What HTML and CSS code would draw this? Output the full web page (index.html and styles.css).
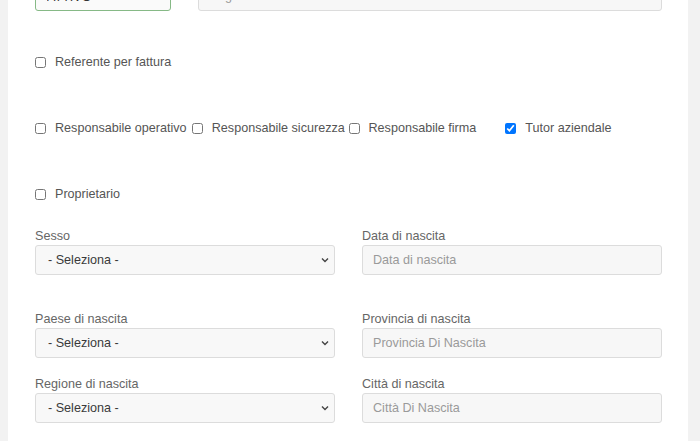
FILE: index.html
```html
<!DOCTYPE html>
<html lang="it">
<head>
    <meta charset="UTF-8">
    <meta name="viewport" content="width=device-width, initial-scale=1.0">
    <title>Anagrafica contatto</title>
    <link rel="stylesheet" href="styles.css">
</head>
<body>
    <div class="card">
        <div class="top-row">
            <input type="text" class="field valid" value="ATTIVO">
            <input type="text" class="field" placeholder="Cognome">
        </div>

        <div class="check-row">
            <label class="check"><input type="checkbox"> Referente per fattura</label>
        </div>

        <div class="check-row four">
            <label class="check"><input type="checkbox"> Responsabile operativo</label>
            <label class="check"><input type="checkbox"> Responsabile sicurezza</label>
            <label class="check"><input type="checkbox"> Responsabile firma</label>
            <label class="check"><input type="checkbox" checked> Tutor aziendale</label>
        </div>

        <div class="check-row">
            <label class="check"><input type="checkbox"> Proprietario</label>
        </div>

        <div class="form-row first">
            <div class="form-fill">
                <label for="sesso">Sesso</label>
                <div class="select-wrap">
                    <select id="sesso" class="field">
                        <option>- Seleziona -</option>
                        <option>M</option>
                        <option>F</option>
                    </select>
                    <svg class="chevron" width="10" height="10" viewBox="0 0 10 10"><path d="M2 3.5 L5 6.5 L8 3.5" fill="none" stroke="#444" stroke-width="1.4"/></svg>
                </div>
            </div>
            <div class="form-fill">
                <label for="nascita">Data di nascita</label>
                <input type="text" id="nascita" class="field" placeholder="Data di nascita">
            </div>
        </div>

        <div class="form-row">
            <div class="form-fill">
                <label for="paese">Paese di nascita</label>
                <div class="select-wrap">
                    <select id="paese" class="field">
                        <option>- Seleziona -</option>
                    </select>
                    <svg class="chevron" width="10" height="10" viewBox="0 0 10 10"><path d="M2 3.5 L5 6.5 L8 3.5" fill="none" stroke="#444" stroke-width="1.4"/></svg>
                </div>
            </div>
            <div class="form-fill">
                <label for="provincia">Provincia di nascita</label>
                <input type="text" id="provincia" class="field" placeholder="Provincia Di Nascita">
            </div>
        </div>

        <div class="form-row">
            <div class="form-fill">
                <label for="regione">Regione di nascita</label>
                <div class="select-wrap">
                    <select id="regione" class="field">
                        <option>- Seleziona -</option>
                    </select>
                    <svg class="chevron" width="10" height="10" viewBox="0 0 10 10"><path d="M2 3.5 L5 6.5 L8 3.5" fill="none" stroke="#444" stroke-width="1.4"/></svg>
                </div>
            </div>
            <div class="form-fill">
                <label for="citta">Città di nascita</label>
                <input type="text" id="citta" class="field" placeholder="Città Di Nascita">
            </div>
        </div>
    </div>
</body>
</html>
```

FILE: styles.css
```css
body{
    margin: 0;
    background: #f2f2f2;
    font-family: "Liberation Sans", Arial, sans-serif;
    font-size: 12.6px;
    color: #555;
    height: 441px;
    overflow: hidden;
}

.card{
    display: flow-root;
    margin-left: 8px;
    width: 680px;
    box-sizing: border-box;
    height: 441px;
    background: #fff;
    padding: 0 26px 0 27px;
}

.top-row{
    display: grid;
    grid-template-columns: 136px 1fr;
    gap: 27px;
    margin-top: -19px;
}

.field{
    box-sizing: border-box;
    height: 30px;
    width: 100%;
    border: 1px solid #dcdcdc;
    border-radius: 3px;
    background: #f7f7f7;
    font-family: "Liberation Sans", Arial, sans-serif;
    font-size: 12.6px;
    color: #444;
    padding: 0 10px;
    outline: none;
}

.field::placeholder{
    color: #9a9a9a;
}

.field.valid{
    border-color: #86b986;
    background: #fafafa;
    color: #333;
    padding: 2px 10px 0 11px;
}

.check-row{
    display: flex;
    line-height: 20px;
    margin-top: 46px;
}
.top-row + .check-row{
    margin-top: 41px;
}

.check-row.four{
    display: grid;
    grid-template-columns: repeat(4, 1fr);
}

.check{
    display: flex;
    align-items: center;
    gap: 9px;
    color: #555;
    white-space: nowrap;
}

.check input{
    margin: 0;
    width: 11px;
    height: 11px;
}

.form-row{
    display: grid;
    grid-template-columns: 300px 300px;
    gap: 27px;
    margin-bottom: 17px;
}
.form-row.first{
    margin-top: 23px;
    margin-bottom: 35px;
}

.form-fill label{
    display: block;
    line-height: 18px;
    color: #666;
}

.select-wrap{
    position: relative;
}

.select-wrap select{
    appearance: none;
    -webkit-appearance: none;
    padding-left: 12px;
    background: #f8f8f8;
    color: #3a3a3a;
}

.chevron{
    position: absolute;
    right: 5px;
    top: 10px;
    pointer-events: none;
}
```
